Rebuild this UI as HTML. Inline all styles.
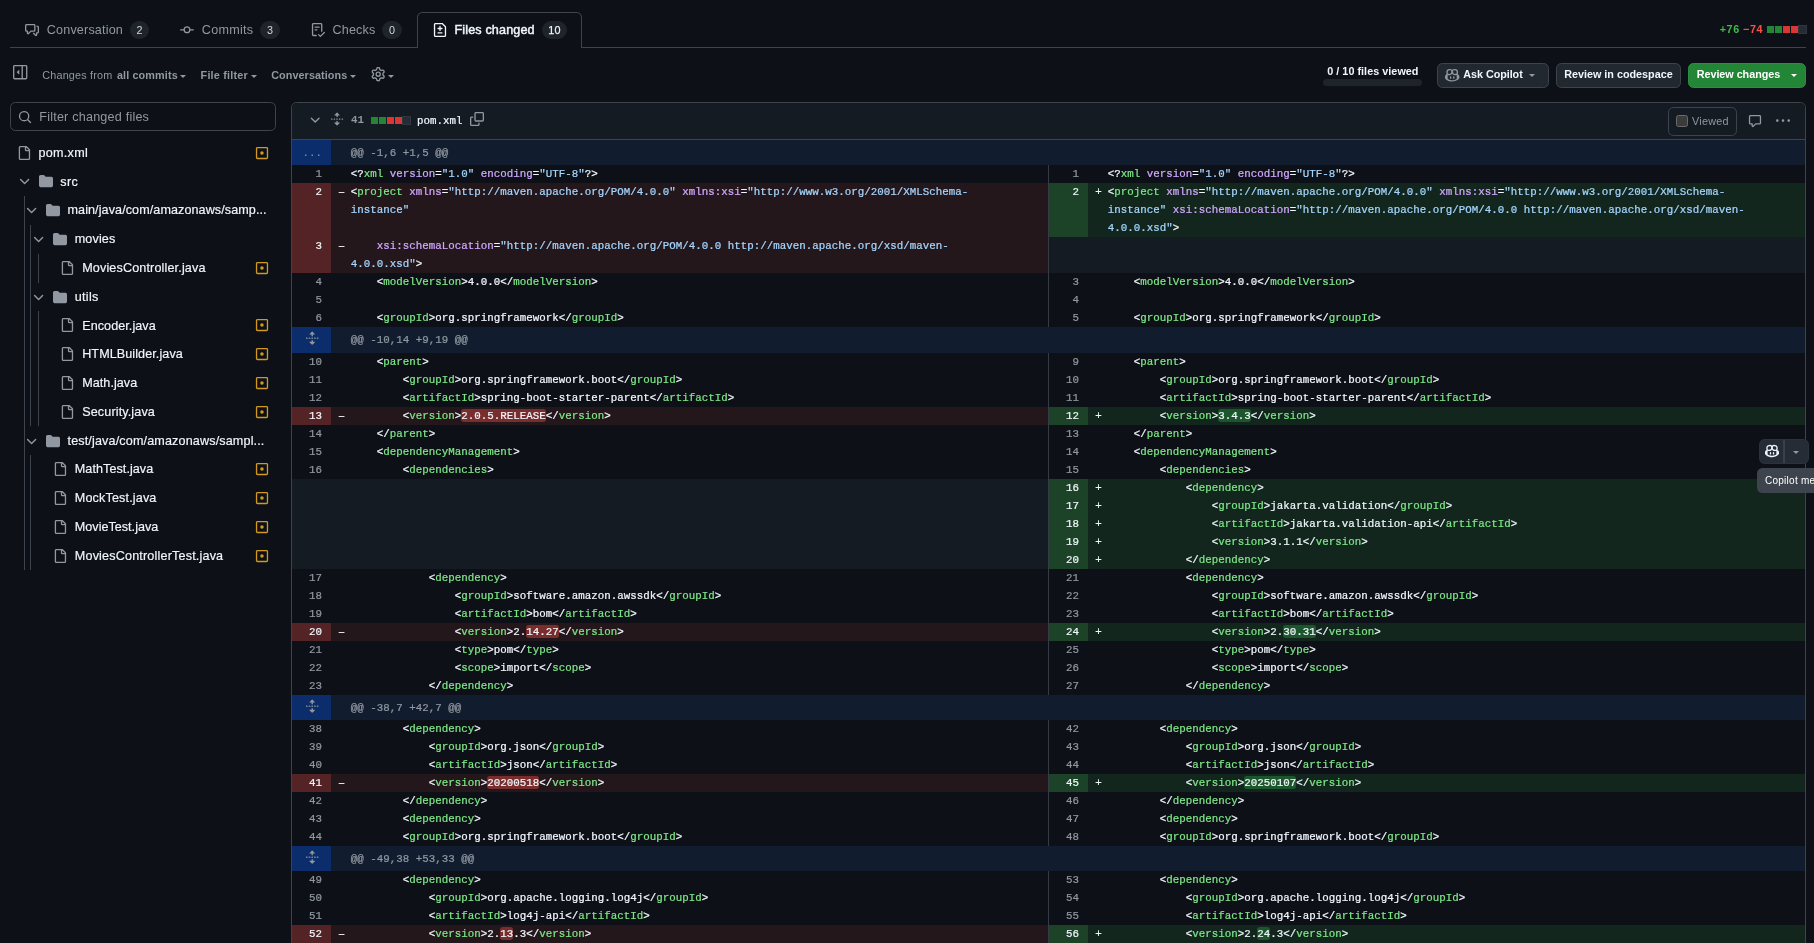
<!DOCTYPE html>
<html lang="en"><head><meta charset="utf-8"><title>Files changed</title>
<style>
html,body{margin:0;padding:0}
body{width:1814px;height:943px;overflow:hidden;background:#0d1117;position:relative;
 font-family:"Liberation Sans",Arial,sans-serif;color:#f0f6fc;-webkit-font-smoothing:antialiased}
svg{display:block;overflow:visible}
.ctr{position:absolute;height:18px;border-radius:9px;background:#1f232a;box-sizing:border-box}
.btn{position:absolute;box-sizing:border-box;border:1px solid #3d444d;border-radius:5.4px;background:#212830}
.row{position:absolute;left:0;width:100%}
.num{position:absolute;top:0;height:100%;box-sizing:border-box;text-align:right;padding-right:9px;
 font:10.8px/18px "Liberation Mono","DejaVu Sans Mono",monospace;color:#9198a1}
.code{position:absolute;top:0;height:100%;box-sizing:border-box;padding-left:19.8px;
 font:10.8px/18px "Liberation Mono","DejaVu Sans Mono",monospace;color:#f0f6fc;white-space:pre;letter-spacing:0.019px}
.mk{position:absolute;left:-12.6px;top:0}
.in{display:block;position:relative;top:-0.4px;-webkit-text-stroke:0.22px}
.ent{color:#7ee787}.e{color:#d2a8ff}.s{color:#a5d6ff}
.xd{background:rgba(248,81,73,.4);border-radius:2.7px;padding-top:.7px}
.xa{background:rgba(46,160,67,.4);border-radius:2.7px;padding-top:.7px}
#app{position:absolute;left:0;top:0;width:1814px;height:943px;overflow:hidden;will-change:transform}

</style></head>
<body>
<div id="app">
<!-- tab navigation -->
<div style="position:absolute;left:10px;top:47px;width:1796px;height:1px;background:#3d444d"></div>
<div style="position:absolute;left:417px;top:12px;width:165px;height:36px;box-sizing:border-box;border:1px solid #3d444d;border-bottom:0;border-radius:5.4px 5.4px 0 0;background:#0d1117"></div>
<svg style="position:absolute;left:25px;top:23px" width="14" height="14" viewBox="0 0 16 16" fill="#9198a1"><path d="M1.75 1h8.5c.966 0 1.75.784 1.75 1.75v5.5A1.75 1.75 0 0 1 10.25 10H7.061l-2.574 2.573A1.458 1.458 0 0 1 2 11.543V10h-.25A1.75 1.75 0 0 1 0 8.25v-5.5C0 1.784.784 1 1.75 1ZM1.5 2.75v5.5c0 .138.112.25.25.25h1a.75.75 0 0 1 .75.75v2.19l2.72-2.72a.749.749 0 0 1 .53-.22h3.5a.25.25 0 0 0 .25-.25v-5.5a.25.25 0 0 0-.25-.25h-8.5a.25.25 0 0 0-.25.25Zm13 2a.25.25 0 0 0-.25-.25h-.5a.75.75 0 0 1 0-1.5h.5c.966 0 1.75.784 1.75 1.75v5.5A1.75 1.75 0 0 1 14.25 12H14v1.543a1.458 1.458 0 0 1-2.487 1.03L9.22 12.28a.749.749 0 0 1 .326-1.275.749.749 0 0 1 .734.215l2.22 2.22v-2.19a.75.75 0 0 1 .75-.75h1a.25.25 0 0 0 .25-.25Z"/></svg>
<span style="position:absolute;left:46.8px;top:21.5px;line-height:16px;font-size:12.6px;color:#9198a1;font-weight:400;font-family:'Liberation Sans', Arial, sans-serif;letter-spacing:0.165px;white-space:pre;">Conversation</span>
<div class="ctr" style="left:130.1px;top:20.6px;width:18.7px"></div>
<span style="position:absolute;left:136.4px;top:21.8px;line-height:16px;font-size:10.8px;color:#d1d7e0;font-weight:400;font-family:'Liberation Sans', Arial, sans-serif;letter-spacing:0.184px;white-space:pre;">2</span>
<svg style="position:absolute;left:180px;top:23px" width="14" height="14" viewBox="0 0 16 16" fill="#9198a1"><path d="M11.93 8.5a4.002 4.002 0 0 1-7.86 0H.75a.75.75 0 0 1 0-1.5h3.32a4.002 4.002 0 0 1 7.86 0h3.32a.75.75 0 0 1 0 1.5Zm-1.43-.75a2.5 2.5 0 1 0-5 0 2.5 2.5 0 0 0 5 0Z"/></svg>
<span style="position:absolute;left:201.8px;top:21.5px;line-height:16px;font-size:12.6px;color:#9198a1;font-weight:400;font-family:'Liberation Sans', Arial, sans-serif;letter-spacing:0.259px;white-space:pre;">Commits</span>
<div class="ctr" style="left:260.1px;top:20.6px;width:19.7px"></div>
<span style="position:absolute;left:266.9px;top:21.8px;line-height:16px;font-size:10.8px;color:#d1d7e0;font-weight:400;font-family:'Liberation Sans', Arial, sans-serif;letter-spacing:0.184px;white-space:pre;">3</span>
<svg style="position:absolute;left:311px;top:23px" width="14" height="14" viewBox="0 0 16 16" fill="#9198a1"><path d="M2.5 1.75v11.5c0 .138.112.25.25.25h3.17a.75.75 0 0 1 0 1.5H2.75A1.75 1.75 0 0 1 1 13.25V1.75C1 .784 1.784 0 2.75 0h8.5C12.216 0 13 .784 13 1.75v7.736a.75.75 0 0 1-1.5 0V1.75a.25.25 0 0 0-.25-.25h-8.5a.25.25 0 0 0-.25.25Zm13.274 9.537v-.001l-4.557 4.45a.75.75 0 0 1-1.055-.008l-1.943-1.95a.75.75 0 0 1 1.062-1.058l1.419 1.425 4.026-3.932a.75.75 0 1 1 1.048 1.074ZM4.75 4h4.5a.75.75 0 0 1 0 1.5h-4.5a.75.75 0 0 1 0-1.5ZM4 7.75A.75.75 0 0 1 4.75 7h2a.75.75 0 0 1 0 1.5h-2A.75.75 0 0 1 4 7.75Z"/></svg>
<span style="position:absolute;left:332.5px;top:21.5px;line-height:16px;font-size:12.6px;color:#9198a1;font-weight:400;font-family:'Liberation Sans', Arial, sans-serif;letter-spacing:0.167px;white-space:pre;">Checks</span>
<div class="ctr" style="left:382.3px;top:20.6px;width:19.7px"></div>
<span style="position:absolute;left:389px;top:21.8px;line-height:16px;font-size:10.8px;color:#d1d7e0;font-weight:400;font-family:'Liberation Sans', Arial, sans-serif;letter-spacing:0.484px;white-space:pre;">0</span>
<svg style="position:absolute;left:433px;top:23px" width="14" height="14" viewBox="0 0 16 16" fill="#f0f6fc"><path d="M1 1.75C1 .784 1.784 0 2.75 0h7.586c.464 0 .909.184 1.237.513l2.914 2.914c.329.328.513.773.513 1.237v9.586A1.75 1.75 0 0 1 13.25 16H2.75A1.75 1.75 0 0 1 1 14.25Zm1.75-.25a.25.25 0 0 0-.25.25v12.5c0 .138.112.25.25.25h10.5a.25.25 0 0 0 .25-.25V4.664a.25.25 0 0 0-.073-.177l-2.914-2.914a.25.25 0 0 0-.177-.073ZM8 3.25a.75.75 0 0 1 .75.75v1.5h1.5a.75.75 0 0 1 0 1.5h-1.5v1.5a.75.75 0 0 1-1.5 0V7h-1.5a.75.75 0 0 1 0-1.5h1.5V4A.75.75 0 0 1 8 3.25Zm-3 8a.75.75 0 0 1 .75-.75h4.5a.75.75 0 0 1 0 1.5h-4.5a.75.75 0 0 1-.75-.75Z"/></svg>
<span style="position:absolute;left:454.5px;top:21.5px;line-height:16px;font-size:12.6px;color:#f0f6fc;font-weight:400;font-family:'Liberation Sans', Arial, sans-serif;letter-spacing:0.137px;white-space:pre;-webkit-text-stroke:0.45px">Files changed</span>
<div class="ctr" style="left:541.9px;top:20.6px;width:25.3px"></div>
<span style="position:absolute;left:548.2px;top:21.8px;line-height:16px;font-size:10.8px;color:#f0f6fc;font-weight:400;font-family:'Liberation Sans', Arial, sans-serif;letter-spacing:0.392px;white-space:pre;-webkit-text-stroke:0.25px">10</span>
<span style="position:absolute;left:1719.7px;top:21.3px;line-height:16px;font-size:10.8px;color:#3fb950;font-weight:700;font-family:'Liberation Sans', Arial, sans-serif;letter-spacing:0.624px;white-space:pre;">+76</span>
<span style="position:absolute;left:1743px;top:21.3px;line-height:16px;font-size:10.8px;color:#f85149;font-weight:700;font-family:'Liberation Sans', Arial, sans-serif;letter-spacing:0.624px;white-space:pre;">−74</span>
<div style="position:absolute;left:1766.8px;top:26px;width:7.1px;height:7.1px;background:#238636"></div>
<div style="position:absolute;left:1774.87px;top:26px;width:7.1px;height:7.1px;background:#238636"></div>
<div style="position:absolute;left:1782.94px;top:26px;width:7.1px;height:7.1px;background:#da3633"></div>
<div style="position:absolute;left:1791.01px;top:26px;width:7.1px;height:7.1px;background:#da3633"></div>
<div style="position:absolute;left:1799.08px;top:26px;width:7.1px;height:7.1px;background:#262c36;outline:0.9px solid #2f3640"></div>
<!-- diff toolbar -->
<svg style="position:absolute;left:13.2px;top:65px" width="14.4" height="14.4" viewBox="0 0 16 16" fill="#9198a1"><path d="m4.177 7.823 2.396-2.396A.25.25 0 0 1 7 5.604v4.792a.25.25 0 0 1-.427.177L4.177 8.177a.25.25 0 0 1 0-.354Z"/><path d="M0 1.75C0 .784.784 0 1.75 0h12.5C15.216 0 16 .784 16 1.75v12.5A1.75 1.75 0 0 1 14.25 16H1.75A1.75 1.75 0 0 1 0 14.25Zm1.75-.25a.25.25 0 0 0-.25.25v12.5c0 .138.112.25.25.25H9.5v-13Zm12.5 13a.25.25 0 0 0 .25-.25V1.75a.25.25 0 0 0-.25-.25H11v13Z"/></svg>
<span style="position:absolute;left:42.3px;top:67.4px;line-height:16px;font-size:10.8px;color:#9198a1;font-weight:400;font-family:'Liberation Sans', Arial, sans-serif;letter-spacing:0.184px;white-space:pre;">Changes from </span>
<span style="position:absolute;left:116.9px;top:67.4px;line-height:16px;font-size:10.8px;color:#9198a1;font-weight:700;font-family:'Liberation Sans', Arial, sans-serif;letter-spacing:0.145px;white-space:pre;">all commits</span>
<div style="position:absolute;left:180.1px;top:74.6px;width:0;height:0;border-left:3.6px solid transparent;border-right:3.6px solid transparent;border-top:3.6px solid #9198a1"></div>
<span style="position:absolute;left:200.6px;top:67.4px;line-height:16px;font-size:10.8px;color:#9198a1;font-weight:700;font-family:'Liberation Sans', Arial, sans-serif;letter-spacing:0.209px;white-space:pre;">File filter</span>
<div style="position:absolute;left:250.7px;top:74.6px;width:0;height:0;border-left:3.6px solid transparent;border-right:3.6px solid transparent;border-top:3.6px solid #9198a1"></div>
<span style="position:absolute;left:271.2px;top:67.4px;line-height:16px;font-size:10.8px;color:#9198a1;font-weight:700;font-family:'Liberation Sans', Arial, sans-serif;letter-spacing:0.085px;white-space:pre;">Conversations</span>
<div style="position:absolute;left:350.2px;top:74.6px;width:0;height:0;border-left:3.6px solid transparent;border-right:3.6px solid transparent;border-top:3.6px solid #9198a1"></div>
<svg style="position:absolute;left:371.2px;top:66.8px" width="14.4" height="14.4" viewBox="0 0 16 16" fill="#9198a1"><path d="M8 0a8.2 8.2 0 0 1 .701.031C9.444.095 9.99.645 10.16 1.29l.288 1.107c.018.066.079.158.212.224.231.114.454.243.668.386.123.082.233.09.299.071l1.103-.303c.644-.176 1.392.021 1.82.63.27.385.506.792.704 1.218.315.675.111 1.422-.364 1.891l-.814.806c-.049.048-.098.147-.088.294.016.257.016.515 0 .772-.01.147.038.246.088.294l.814.806c.475.469.679 1.216.364 1.891a7.977 7.977 0 0 1-.704 1.217c-.428.61-1.176.807-1.82.63l-1.102-.302c-.067-.019-.177-.011-.3.071a5.909 5.909 0 0 1-.668.386c-.133.066-.194.158-.211.224l-.29 1.106c-.168.646-.715 1.196-1.458 1.26a8.006 8.006 0 0 1-1.402 0c-.743-.064-1.289-.614-1.458-1.26l-.289-1.106c-.018-.066-.079-.158-.212-.224a5.738 5.738 0 0 1-.668-.386c-.123-.082-.233-.09-.299-.071l-1.103.303c-.644.176-1.392-.021-1.82-.63a8.12 8.12 0 0 1-.704-1.218c-.315-.675-.111-1.422.363-1.891l.815-.806c.05-.048.098-.147.088-.294a6.214 6.214 0 0 1 0-.772c.01-.147-.038-.246-.088-.294l-.815-.806C.635 6.045.431 5.298.746 4.623a7.92 7.92 0 0 1 .704-1.217c.428-.61 1.176-.807 1.82-.63l1.102.302c.067.019.177.011.3-.071.214-.143.437-.272.668-.386.133-.066.194-.158.211-.224l.29-1.106C6.009.645 6.556.095 7.299.03 7.53.01 7.764 0 8 0Zm-.571 1.525c-.036.003-.108.036-.137.146l-.289 1.105c-.147.561-.549.967-.998 1.189-.173.086-.34.183-.5.29-.417.278-.97.423-1.529.27l-1.103-.303c-.109-.03-.175.016-.195.045-.22.312-.412.644-.573.99-.014.031-.021.11.059.19l.815.806c.411.406.562.957.53 1.456a4.709 4.709 0 0 0 0 .582c.032.499-.119 1.05-.53 1.456l-.815.806c-.081.08-.073.159-.059.19.162.346.353.677.573.989.02.03.085.076.195.046l1.102-.303c.56-.153 1.113-.008 1.53.27.161.107.328.204.501.29.447.222.85.629.997 1.189l.289 1.105c.029.109.101.143.137.146a6.6 6.6 0 0 0 1.142 0c.036-.003.108-.036.137-.146l.289-1.105c.147-.561.549-.967.998-1.189.173-.086.34-.183.5-.29.417-.278.97-.423 1.529-.27l1.103.303c.109.029.175-.016.195-.045.22-.313.411-.644.573-.99.014-.031.021-.11-.059-.19l-.815-.806c-.411-.406-.562-.957-.53-1.456a4.709 4.709 0 0 0 0-.582c-.032-.499.119-1.05.53-1.456l.815-.806c.081-.08.073-.159.059-.19a6.464 6.464 0 0 0-.573-.989c-.02-.03-.085-.076-.195-.046l-1.102.303c-.56.153-1.113.008-1.53-.27a4.44 4.44 0 0 0-.501-.29c-.447-.222-.85-.629-.997-1.189l-.289-1.105c-.029-.11-.101-.143-.137-.146a6.6 6.6 0 0 0-1.142 0ZM11 8a3 3 0 1 1-6 0 3 3 0 0 1 6 0ZM9.5 8a1.5 1.5 0 1 0-3.001.001A1.5 1.5 0 0 0 9.5 8Z"/></svg>
<div style="position:absolute;left:387.8px;top:74.6px;width:0;height:0;border-left:3.6px solid transparent;border-right:3.6px solid transparent;border-top:3.6px solid #9198a1"></div>
<span style="position:absolute;left:1327.2px;top:63.4px;line-height:16px;font-size:10.8px;color:#f0f6fc;font-weight:700;font-family:'Liberation Sans', Arial, sans-serif;letter-spacing:0.036px;white-space:pre;">0 / 10 files viewed</span>
<div style="position:absolute;left:1322.9px;top:79px;width:99.3px;height:7.1px;background:#1f232a;border-radius:3.6px"></div>
<div class="btn" style="left:1437px;top:62.8px;width:112px;height:25.2px"></div>
<svg style="position:absolute;left:1444.7px;top:67.9px" width="14.4" height="14.4" viewBox="0 0 16 16" fill="#9198a1"><path d="M7.998 15.035c-4.562 0-7.873-2.914-7.998-3.749V9.338c.085-.628.677-1.686 1.588-2.065.013-.07.024-.143.036-.218.029-.183.06-.384.126-.612-.201-.508-.254-1.084-.254-1.656 0-.87.128-1.769.693-2.484.579-.733 1.494-1.124 2.724-1.261 1.206-.134 2.262.034 2.944.765.05.053.096.108.139.165.044-.057.094-.112.143-.165.682-.731 1.738-.899 2.944-.765 1.23.137 2.145.528 2.724 1.261.566.715.693 1.614.693 2.484 0 .572-.053 1.148-.254 1.656.066.228.098.429.126.612.012.076.024.148.037.218.924.385 1.522 1.471 1.591 2.095v1.872c0 .766-3.351 3.795-8.002 3.795Zm0-1.485c2.28 0 4.584-1.11 5.002-1.433V7.862l-.023-.116c-.49.21-1.075.291-1.727.291-1.146 0-2.059-.327-2.71-.991A3.222 3.222 0 0 1 8 6.303a3.24 3.24 0 0 1-.544.743c-.65.664-1.563.991-2.71.991-.652 0-1.236-.081-1.727-.291l-.023.116v4.255c.419.323 2.722 1.433 5.002 1.433ZM6.762 2.83c-.193-.206-.637-.413-1.682-.297-1.019.113-1.479.404-1.713.7-.247.312-.369.789-.369 1.554 0 .793.129 1.171.308 1.371.162.181.519.379 1.442.379.853 0 1.339-.235 1.638-.54.315-.322.527-.827.617-1.553.117-.935-.037-1.395-.241-1.614Zm4.155-.297c-1.044-.116-1.488.091-1.681.297-.204.219-.359.679-.242 1.614.091.726.303 1.231.618 1.553.299.305.784.54 1.638.54.922 0 1.28-.198 1.442-.379.179-.2.308-.578.308-1.371 0-.765-.123-1.242-.37-1.554-.233-.296-.693-.587-1.713-.7Z"/><path d="M6.25 9.037a.75.75 0 0 1 .75.75v1.501a.75.75 0 0 1-1.5 0V9.787a.75.75 0 0 1 .75-.75Zm4.25.75v1.501a.75.75 0 0 1-1.5 0V9.787a.75.75 0 0 1 1.5 0Z"/></svg>
<span style="position:absolute;left:1463.3px;top:66.2px;line-height:16px;font-size:10.8px;color:#f0f6fc;font-weight:700;font-family:'Liberation Sans', Arial, sans-serif;letter-spacing:-0.053px;white-space:pre;">Ask Copilot</span>
<div style="position:absolute;left:1529.4px;top:73.9px;width:0;height:0;border-left:3.6px solid transparent;border-right:3.6px solid transparent;border-top:3.6px solid #9198a1"></div>
<div class="btn" style="left:1555.8px;top:62.8px;width:125px;height:25.2px"></div>
<span style="position:absolute;left:1564.2px;top:66.2px;line-height:16px;font-size:10.8px;color:#f0f6fc;font-weight:700;font-family:'Liberation Sans', Arial, sans-serif;letter-spacing:-0.007px;white-space:pre;">Review in codespace</span>
<div class="btn" style="left:1687.8px;top:62.8px;width:118.3px;height:25.2px;background:#238636;border-color:#2a8f3e"></div>
<span style="position:absolute;left:1696.7px;top:66.2px;line-height:16px;font-size:10.8px;color:#ffffff;font-weight:700;font-family:'Liberation Sans', Arial, sans-serif;letter-spacing:-0.037px;white-space:pre;">Review changes</span>
<div style="position:absolute;left:1791.2px;top:74.1px;width:0;height:0;border-left:3.6px solid transparent;border-right:3.6px solid transparent;border-top:3.6px solid #ffffff"></div>
<!-- file tree sidebar -->
<div style="position:absolute;left:10px;top:102px;width:266px;height:28.8px;box-sizing:border-box;border:1px solid #3d444d;border-radius:5.4px;background:#0d1117"></div>
<svg style="position:absolute;left:17.6px;top:110.3px" width="14" height="14" viewBox="0 0 16 16" fill="#9198a1"><path d="M10.68 11.74a6 6 0 0 1-7.922-8.982 6 6 0 0 1 8.982 7.922l3.04 3.04a.749.749 0 0 1-.326 1.275.749.749 0 0 1-.734-.215ZM11.5 7a4.499 4.499 0 1 0-8.997 0A4.499 4.499 0 0 0 11.5 7Z"/></svg>
<span style="position:absolute;left:39.3px;top:108.6px;line-height:16px;font-size:12.6px;color:#9198a1;font-weight:400;font-family:'Liberation Sans', Arial, sans-serif;letter-spacing:0.205px;white-space:pre;">Filter changed files</span>
<div style="position:absolute;left:24px;top:196px;width:1px;height:374px;background:#3d444d"></div>
<div style="position:absolute;left:30px;top:225px;width:1px;height:201px;background:#3d444d"></div>
<div style="position:absolute;left:38px;top:254px;width:1px;height:28.6px;background:#3d444d"></div>
<div style="position:absolute;left:38px;top:311.4px;width:1px;height:114.6px;background:#3d444d"></div>
<div style="position:absolute;left:30px;top:455.2px;width:1px;height:114.8px;background:#3d444d"></div>
<svg style="position:absolute;left:17px;top:146px" width="14" height="14" viewBox="0 0 16 16" fill="#9198a1"><path d="M2 1.75C2 .784 2.784 0 3.75 0h6.586c.464 0 .909.184 1.237.513l2.914 2.914c.329.328.513.773.513 1.237v9.586A1.75 1.75 0 0 1 13.25 16h-9.5A1.75 1.75 0 0 1 2 14.25Zm1.75-.25a.25.25 0 0 0-.25.25v12.5c0 .138.112.25.25.25h9.5a.25.25 0 0 0 .25-.25V6h-2.75A1.75 1.75 0 0 1 9 4.25V1.5Zm6.75.062V4.25c0 .138.112.25.25.25h2.688l-.011-.013-2.914-2.914-.013-.011Z"/></svg>
<span style="position:absolute;left:38.6px;top:145px;line-height:16px;font-size:12.6px;color:#f0f6fc;font-weight:400;font-family:'Liberation Sans', Arial, sans-serif;letter-spacing:0.258px;white-space:pre;-webkit-text-stroke:0.18px">pom.xml</span>
<svg style="position:absolute;left:255px;top:146px" width="14" height="14" viewBox="0 0 16 16" fill="#d29922"><path d="M13.25 1c.966 0 1.75.784 1.75 1.75v10.5A1.75 1.75 0 0 1 13.25 15H2.75A1.75 1.75 0 0 1 1 13.25V2.75C1 1.784 1.784 1 2.75 1ZM2.75 2.5a.25.25 0 0 0-.25.25v10.5c0 .138.112.25.25.25h10.5a.25.25 0 0 0 .25-.25V2.75a.25.25 0 0 0-.25-.25ZM8 10a2 2 0 1 1-.001-3.999A2 2 0 0 1 8 10Z"/></svg>
<svg style="position:absolute;left:16.6px;top:173.6px" width="15.2" height="15.2" viewBox="0 0 16 16" fill="#9198a1"><path d="M12.78 5.22a.749.749 0 0 1 0 1.06l-4.25 4.25a.749.749 0 0 1-1.06 0L3.22 6.28a.749.749 0 1 1 1.06-1.06L8 8.939l3.72-3.719a.749.749 0 0 1 1.06 0Z"/></svg>
<svg style="position:absolute;left:39px;top:174px" width="14" height="14" viewBox="0 0 16 16" fill="#9198a1"><path d="M1.75 1A1.75 1.75 0 0 0 0 2.75v10.5C0 14.216.784 15 1.75 15h12.5A1.75 1.75 0 0 0 16 13.25v-8.5A1.75 1.75 0 0 0 14.25 3H7.5a.25.25 0 0 1-.2-.1l-.9-1.2C6.07 1.26 5.55 1 5 1H1.75Z"/></svg>
<span style="position:absolute;left:60.3px;top:174px;line-height:16px;font-size:12.6px;color:#f0f6fc;font-weight:400;font-family:'Liberation Sans', Arial, sans-serif;letter-spacing:0.301px;white-space:pre;-webkit-text-stroke:0.18px">src</span>
<svg style="position:absolute;left:23.6px;top:202.6px" width="15.2" height="15.2" viewBox="0 0 16 16" fill="#9198a1"><path d="M12.78 5.22a.749.749 0 0 1 0 1.06l-4.25 4.25a.749.749 0 0 1-1.06 0L3.22 6.28a.749.749 0 1 1 1.06-1.06L8 8.939l3.72-3.719a.749.749 0 0 1 1.06 0Z"/></svg>
<svg style="position:absolute;left:46px;top:203px" width="14" height="14" viewBox="0 0 16 16" fill="#9198a1"><path d="M1.75 1A1.75 1.75 0 0 0 0 2.75v10.5C0 14.216.784 15 1.75 15h12.5A1.75 1.75 0 0 0 16 13.25v-8.5A1.75 1.75 0 0 0 14.25 3H7.5a.25.25 0 0 1-.2-.1l-.9-1.2C6.07 1.26 5.55 1 5 1H1.75Z"/></svg>
<span style="position:absolute;left:67.5px;top:202px;line-height:16px;font-size:12.6px;color:#f0f6fc;font-weight:400;font-family:'Liberation Sans', Arial, sans-serif;letter-spacing:0.081px;white-space:pre;-webkit-text-stroke:0.18px">main/java/com/amazonaws/samp...</span>
<svg style="position:absolute;left:30.6px;top:231.6px" width="15.2" height="15.2" viewBox="0 0 16 16" fill="#9198a1"><path d="M12.78 5.22a.749.749 0 0 1 0 1.06l-4.25 4.25a.749.749 0 0 1-1.06 0L3.22 6.28a.749.749 0 1 1 1.06-1.06L8 8.939l3.72-3.719a.749.749 0 0 1 1.06 0Z"/></svg>
<svg style="position:absolute;left:53px;top:232px" width="14" height="14" viewBox="0 0 16 16" fill="#9198a1"><path d="M1.75 1A1.75 1.75 0 0 0 0 2.75v10.5C0 14.216.784 15 1.75 15h12.5A1.75 1.75 0 0 0 16 13.25v-8.5A1.75 1.75 0 0 0 14.25 3H7.5a.25.25 0 0 1-.2-.1l-.9-1.2C6.07 1.26 5.55 1 5 1H1.75Z"/></svg>
<span style="position:absolute;left:74.7px;top:231px;line-height:16px;font-size:12.6px;color:#f0f6fc;font-weight:400;font-family:'Liberation Sans', Arial, sans-serif;letter-spacing:0.135px;white-space:pre;-webkit-text-stroke:0.18px">movies</span>
<svg style="position:absolute;left:60px;top:261px" width="14" height="14" viewBox="0 0 16 16" fill="#9198a1"><path d="M2 1.75C2 .784 2.784 0 3.75 0h6.586c.464 0 .909.184 1.237.513l2.914 2.914c.329.328.513.773.513 1.237v9.586A1.75 1.75 0 0 1 13.25 16h-9.5A1.75 1.75 0 0 1 2 14.25Zm1.75-.25a.25.25 0 0 0-.25.25v12.5c0 .138.112.25.25.25h9.5a.25.25 0 0 0 .25-.25V6h-2.75A1.75 1.75 0 0 1 9 4.25V1.5Zm6.75.062V4.25c0 .138.112.25.25.25h2.688l-.011-.013-2.914-2.914-.013-.011Z"/></svg>
<span style="position:absolute;left:82.2px;top:260px;line-height:16px;font-size:12.6px;color:#f0f6fc;font-weight:400;font-family:'Liberation Sans', Arial, sans-serif;letter-spacing:0.143px;white-space:pre;-webkit-text-stroke:0.18px">MoviesController.java</span>
<svg style="position:absolute;left:255px;top:261px" width="14" height="14" viewBox="0 0 16 16" fill="#d29922"><path d="M13.25 1c.966 0 1.75.784 1.75 1.75v10.5A1.75 1.75 0 0 1 13.25 15H2.75A1.75 1.75 0 0 1 1 13.25V2.75C1 1.784 1.784 1 2.75 1ZM2.75 2.5a.25.25 0 0 0-.25.25v10.5c0 .138.112.25.25.25h10.5a.25.25 0 0 0 .25-.25V2.75a.25.25 0 0 0-.25-.25ZM8 10a2 2 0 1 1-.001-3.999A2 2 0 0 1 8 10Z"/></svg>
<svg style="position:absolute;left:30.6px;top:289.6px" width="15.2" height="15.2" viewBox="0 0 16 16" fill="#9198a1"><path d="M12.78 5.22a.749.749 0 0 1 0 1.06l-4.25 4.25a.749.749 0 0 1-1.06 0L3.22 6.28a.749.749 0 1 1 1.06-1.06L8 8.939l3.72-3.719a.749.749 0 0 1 1.06 0Z"/></svg>
<svg style="position:absolute;left:53px;top:290px" width="14" height="14" viewBox="0 0 16 16" fill="#9198a1"><path d="M1.75 1A1.75 1.75 0 0 0 0 2.75v10.5C0 14.216.784 15 1.75 15h12.5A1.75 1.75 0 0 0 16 13.25v-8.5A1.75 1.75 0 0 0 14.25 3H7.5a.25.25 0 0 1-.2-.1l-.9-1.2C6.07 1.26 5.55 1 5 1H1.75Z"/></svg>
<span style="position:absolute;left:74.7px;top:289px;line-height:16px;font-size:12.6px;color:#f0f6fc;font-weight:400;font-family:'Liberation Sans', Arial, sans-serif;letter-spacing:0.299px;white-space:pre;-webkit-text-stroke:0.18px">utils</span>
<svg style="position:absolute;left:60px;top:318px" width="14" height="14" viewBox="0 0 16 16" fill="#9198a1"><path d="M2 1.75C2 .784 2.784 0 3.75 0h6.586c.464 0 .909.184 1.237.513l2.914 2.914c.329.328.513.773.513 1.237v9.586A1.75 1.75 0 0 1 13.25 16h-9.5A1.75 1.75 0 0 1 2 14.25Zm1.75-.25a.25.25 0 0 0-.25.25v12.5c0 .138.112.25.25.25h9.5a.25.25 0 0 0 .25-.25V6h-2.75A1.75 1.75 0 0 1 9 4.25V1.5Zm6.75.062V4.25c0 .138.112.25.25.25h2.688l-.011-.013-2.914-2.914-.013-.011Z"/></svg>
<span style="position:absolute;left:82.2px;top:318px;line-height:16px;font-size:12.6px;color:#f0f6fc;font-weight:400;font-family:'Liberation Sans', Arial, sans-serif;letter-spacing:0.064px;white-space:pre;-webkit-text-stroke:0.18px">Encoder.java</span>
<svg style="position:absolute;left:255px;top:318px" width="14" height="14" viewBox="0 0 16 16" fill="#d29922"><path d="M13.25 1c.966 0 1.75.784 1.75 1.75v10.5A1.75 1.75 0 0 1 13.25 15H2.75A1.75 1.75 0 0 1 1 13.25V2.75C1 1.784 1.784 1 2.75 1ZM2.75 2.5a.25.25 0 0 0-.25.25v10.5c0 .138.112.25.25.25h10.5a.25.25 0 0 0 .25-.25V2.75a.25.25 0 0 0-.25-.25ZM8 10a2 2 0 1 1-.001-3.999A2 2 0 0 1 8 10Z"/></svg>
<svg style="position:absolute;left:60px;top:347px" width="14" height="14" viewBox="0 0 16 16" fill="#9198a1"><path d="M2 1.75C2 .784 2.784 0 3.75 0h6.586c.464 0 .909.184 1.237.513l2.914 2.914c.329.328.513.773.513 1.237v9.586A1.75 1.75 0 0 1 13.25 16h-9.5A1.75 1.75 0 0 1 2 14.25Zm1.75-.25a.25.25 0 0 0-.25.25v12.5c0 .138.112.25.25.25h9.5a.25.25 0 0 0 .25-.25V6h-2.75A1.75 1.75 0 0 1 9 4.25V1.5Zm6.75.062V4.25c0 .138.112.25.25.25h2.688l-.011-.013-2.914-2.914-.013-.011Z"/></svg>
<span style="position:absolute;left:82.2px;top:346px;line-height:16px;font-size:12.6px;color:#f0f6fc;font-weight:400;font-family:'Liberation Sans', Arial, sans-serif;letter-spacing:0.081px;white-space:pre;-webkit-text-stroke:0.18px">HTMLBuilder.java</span>
<svg style="position:absolute;left:255px;top:347px" width="14" height="14" viewBox="0 0 16 16" fill="#d29922"><path d="M13.25 1c.966 0 1.75.784 1.75 1.75v10.5A1.75 1.75 0 0 1 13.25 15H2.75A1.75 1.75 0 0 1 1 13.25V2.75C1 1.784 1.784 1 2.75 1ZM2.75 2.5a.25.25 0 0 0-.25.25v10.5c0 .138.112.25.25.25h10.5a.25.25 0 0 0 .25-.25V2.75a.25.25 0 0 0-.25-.25ZM8 10a2 2 0 1 1-.001-3.999A2 2 0 0 1 8 10Z"/></svg>
<svg style="position:absolute;left:60px;top:376px" width="14" height="14" viewBox="0 0 16 16" fill="#9198a1"><path d="M2 1.75C2 .784 2.784 0 3.75 0h6.586c.464 0 .909.184 1.237.513l2.914 2.914c.329.328.513.773.513 1.237v9.586A1.75 1.75 0 0 1 13.25 16h-9.5A1.75 1.75 0 0 1 2 14.25Zm1.75-.25a.25.25 0 0 0-.25.25v12.5c0 .138.112.25.25.25h9.5a.25.25 0 0 0 .25-.25V6h-2.75A1.75 1.75 0 0 1 9 4.25V1.5Zm6.75.062V4.25c0 .138.112.25.25.25h2.688l-.011-.013-2.914-2.914-.013-.011Z"/></svg>
<span style="position:absolute;left:82.2px;top:375px;line-height:16px;font-size:12.6px;color:#f0f6fc;font-weight:400;font-family:'Liberation Sans', Arial, sans-serif;letter-spacing:0.055px;white-space:pre;-webkit-text-stroke:0.18px">Math.java</span>
<svg style="position:absolute;left:255px;top:376px" width="14" height="14" viewBox="0 0 16 16" fill="#d29922"><path d="M13.25 1c.966 0 1.75.784 1.75 1.75v10.5A1.75 1.75 0 0 1 13.25 15H2.75A1.75 1.75 0 0 1 1 13.25V2.75C1 1.784 1.784 1 2.75 1ZM2.75 2.5a.25.25 0 0 0-.25.25v10.5c0 .138.112.25.25.25h10.5a.25.25 0 0 0 .25-.25V2.75a.25.25 0 0 0-.25-.25ZM8 10a2 2 0 1 1-.001-3.999A2 2 0 0 1 8 10Z"/></svg>
<svg style="position:absolute;left:60px;top:405px" width="14" height="14" viewBox="0 0 16 16" fill="#9198a1"><path d="M2 1.75C2 .784 2.784 0 3.75 0h6.586c.464 0 .909.184 1.237.513l2.914 2.914c.329.328.513.773.513 1.237v9.586A1.75 1.75 0 0 1 13.25 16h-9.5A1.75 1.75 0 0 1 2 14.25Zm1.75-.25a.25.25 0 0 0-.25.25v12.5c0 .138.112.25.25.25h9.5a.25.25 0 0 0 .25-.25V6h-2.75A1.75 1.75 0 0 1 9 4.25V1.5Zm6.75.062V4.25c0 .138.112.25.25.25h2.688l-.011-.013-2.914-2.914-.013-.011Z"/></svg>
<span style="position:absolute;left:82.2px;top:404px;line-height:16px;font-size:12.6px;color:#f0f6fc;font-weight:400;font-family:'Liberation Sans', Arial, sans-serif;letter-spacing:0.125px;white-space:pre;-webkit-text-stroke:0.18px">Security.java</span>
<svg style="position:absolute;left:255px;top:405px" width="14" height="14" viewBox="0 0 16 16" fill="#d29922"><path d="M13.25 1c.966 0 1.75.784 1.75 1.75v10.5A1.75 1.75 0 0 1 13.25 15H2.75A1.75 1.75 0 0 1 1 13.25V2.75C1 1.784 1.784 1 2.75 1ZM2.75 2.5a.25.25 0 0 0-.25.25v10.5c0 .138.112.25.25.25h10.5a.25.25 0 0 0 .25-.25V2.75a.25.25 0 0 0-.25-.25ZM8 10a2 2 0 1 1-.001-3.999A2 2 0 0 1 8 10Z"/></svg>
<svg style="position:absolute;left:23.6px;top:433.6px" width="15.2" height="15.2" viewBox="0 0 16 16" fill="#9198a1"><path d="M12.78 5.22a.749.749 0 0 1 0 1.06l-4.25 4.25a.749.749 0 0 1-1.06 0L3.22 6.28a.749.749 0 1 1 1.06-1.06L8 8.939l3.72-3.719a.749.749 0 0 1 1.06 0Z"/></svg>
<svg style="position:absolute;left:46px;top:434px" width="14" height="14" viewBox="0 0 16 16" fill="#9198a1"><path d="M1.75 1A1.75 1.75 0 0 0 0 2.75v10.5C0 14.216.784 15 1.75 15h12.5A1.75 1.75 0 0 0 16 13.25v-8.5A1.75 1.75 0 0 0 14.25 3H7.5a.25.25 0 0 1-.2-.1l-.9-1.2C6.07 1.26 5.55 1 5 1H1.75Z"/></svg>
<span style="position:absolute;left:67.5px;top:433px;line-height:16px;font-size:12.6px;color:#f0f6fc;font-weight:400;font-family:'Liberation Sans', Arial, sans-serif;letter-spacing:0.141px;white-space:pre;-webkit-text-stroke:0.18px">test/java/com/amazonaws/sampl...</span>
<svg style="position:absolute;left:53px;top:462px" width="14" height="14" viewBox="0 0 16 16" fill="#9198a1"><path d="M2 1.75C2 .784 2.784 0 3.75 0h6.586c.464 0 .909.184 1.237.513l2.914 2.914c.329.328.513.773.513 1.237v9.586A1.75 1.75 0 0 1 13.25 16h-9.5A1.75 1.75 0 0 1 2 14.25Zm1.75-.25a.25.25 0 0 0-.25.25v12.5c0 .138.112.25.25.25h9.5a.25.25 0 0 0 .25-.25V6h-2.75A1.75 1.75 0 0 1 9 4.25V1.5Zm6.75.062V4.25c0 .138.112.25.25.25h2.688l-.011-.013-2.914-2.914-.013-.011Z"/></svg>
<span style="position:absolute;left:74.8px;top:461px;line-height:16px;font-size:12.6px;color:#f0f6fc;font-weight:400;font-family:'Liberation Sans', Arial, sans-serif;letter-spacing:0.061px;white-space:pre;-webkit-text-stroke:0.18px">MathTest.java</span>
<svg style="position:absolute;left:255px;top:462px" width="14" height="14" viewBox="0 0 16 16" fill="#d29922"><path d="M13.25 1c.966 0 1.75.784 1.75 1.75v10.5A1.75 1.75 0 0 1 13.25 15H2.75A1.75 1.75 0 0 1 1 13.25V2.75C1 1.784 1.784 1 2.75 1ZM2.75 2.5a.25.25 0 0 0-.25.25v10.5c0 .138.112.25.25.25h10.5a.25.25 0 0 0 .25-.25V2.75a.25.25 0 0 0-.25-.25ZM8 10a2 2 0 1 1-.001-3.999A2 2 0 0 1 8 10Z"/></svg>
<svg style="position:absolute;left:53px;top:491px" width="14" height="14" viewBox="0 0 16 16" fill="#9198a1"><path d="M2 1.75C2 .784 2.784 0 3.75 0h6.586c.464 0 .909.184 1.237.513l2.914 2.914c.329.328.513.773.513 1.237v9.586A1.75 1.75 0 0 1 13.25 16h-9.5A1.75 1.75 0 0 1 2 14.25Zm1.75-.25a.25.25 0 0 0-.25.25v12.5c0 .138.112.25.25.25h9.5a.25.25 0 0 0 .25-.25V6h-2.75A1.75 1.75 0 0 1 9 4.25V1.5Zm6.75.062V4.25c0 .138.112.25.25.25h2.688l-.011-.013-2.914-2.914-.013-.011Z"/></svg>
<span style="position:absolute;left:74.8px;top:490px;line-height:16px;font-size:12.6px;color:#f0f6fc;font-weight:400;font-family:'Liberation Sans', Arial, sans-serif;letter-spacing:0.146px;white-space:pre;-webkit-text-stroke:0.18px">MockTest.java</span>
<svg style="position:absolute;left:255px;top:491px" width="14" height="14" viewBox="0 0 16 16" fill="#d29922"><path d="M13.25 1c.966 0 1.75.784 1.75 1.75v10.5A1.75 1.75 0 0 1 13.25 15H2.75A1.75 1.75 0 0 1 1 13.25V2.75C1 1.784 1.784 1 2.75 1ZM2.75 2.5a.25.25 0 0 0-.25.25v10.5c0 .138.112.25.25.25h10.5a.25.25 0 0 0 .25-.25V2.75a.25.25 0 0 0-.25-.25ZM8 10a2 2 0 1 1-.001-3.999A2 2 0 0 1 8 10Z"/></svg>
<svg style="position:absolute;left:53px;top:520px" width="14" height="14" viewBox="0 0 16 16" fill="#9198a1"><path d="M2 1.75C2 .784 2.784 0 3.75 0h6.586c.464 0 .909.184 1.237.513l2.914 2.914c.329.328.513.773.513 1.237v9.586A1.75 1.75 0 0 1 13.25 16h-9.5A1.75 1.75 0 0 1 2 14.25Zm1.75-.25a.25.25 0 0 0-.25.25v12.5c0 .138.112.25.25.25h9.5a.25.25 0 0 0 .25-.25V6h-2.75A1.75 1.75 0 0 1 9 4.25V1.5Zm6.75.062V4.25c0 .138.112.25.25.25h2.688l-.011-.013-2.914-2.914-.013-.011Z"/></svg>
<span style="position:absolute;left:74.8px;top:519px;line-height:16px;font-size:12.6px;color:#f0f6fc;font-weight:400;font-family:'Liberation Sans', Arial, sans-serif;letter-spacing:0.015px;white-space:pre;-webkit-text-stroke:0.18px">MovieTest.java</span>
<svg style="position:absolute;left:255px;top:520px" width="14" height="14" viewBox="0 0 16 16" fill="#d29922"><path d="M13.25 1c.966 0 1.75.784 1.75 1.75v10.5A1.75 1.75 0 0 1 13.25 15H2.75A1.75 1.75 0 0 1 1 13.25V2.75C1 1.784 1.784 1 2.75 1ZM2.75 2.5a.25.25 0 0 0-.25.25v10.5c0 .138.112.25.25.25h10.5a.25.25 0 0 0 .25-.25V2.75a.25.25 0 0 0-.25-.25ZM8 10a2 2 0 1 1-.001-3.999A2 2 0 0 1 8 10Z"/></svg>
<svg style="position:absolute;left:53px;top:549px" width="14" height="14" viewBox="0 0 16 16" fill="#9198a1"><path d="M2 1.75C2 .784 2.784 0 3.75 0h6.586c.464 0 .909.184 1.237.513l2.914 2.914c.329.328.513.773.513 1.237v9.586A1.75 1.75 0 0 1 13.25 16h-9.5A1.75 1.75 0 0 1 2 14.25Zm1.75-.25a.25.25 0 0 0-.25.25v12.5c0 .138.112.25.25.25h9.5a.25.25 0 0 0 .25-.25V6h-2.75A1.75 1.75 0 0 1 9 4.25V1.5Zm6.75.062V4.25c0 .138.112.25.25.25h2.688l-.011-.013-2.914-2.914-.013-.011Z"/></svg>
<span style="position:absolute;left:74.8px;top:548px;line-height:16px;font-size:12.6px;color:#f0f6fc;font-weight:400;font-family:'Liberation Sans', Arial, sans-serif;letter-spacing:0.172px;white-space:pre;-webkit-text-stroke:0.18px">MoviesControllerTest.java</span>
<svg style="position:absolute;left:255px;top:549px" width="14" height="14" viewBox="0 0 16 16" fill="#d29922"><path d="M13.25 1c.966 0 1.75.784 1.75 1.75v10.5A1.75 1.75 0 0 1 13.25 15H2.75A1.75 1.75 0 0 1 1 13.25V2.75C1 1.784 1.784 1 2.75 1ZM2.75 2.5a.25.25 0 0 0-.25.25v10.5c0 .138.112.25.25.25h10.5a.25.25 0 0 0 .25-.25V2.75a.25.25 0 0 0-.25-.25ZM8 10a2 2 0 1 1-.001-3.999A2 2 0 0 1 8 10Z"/></svg>
<!-- diff file box -->
<div style="position:absolute;left:291px;top:102px;width:1515px;height:860px;box-sizing:border-box;border:1px solid #3d444d;border-radius:5.4px;background:#0d1117"></div>
<div style="position:absolute;left:292px;top:103px;width:1513px;height:36px;background:#151b23;border-bottom:1px solid #3d444d;border-radius:4.4px 4.4px 0 0"></div>
<svg style="position:absolute;left:307.7px;top:113.4px" width="14.4" height="14.4" viewBox="0 0 16 16" fill="#9198a1"><path d="M12.78 5.22a.749.749 0 0 1 0 1.06l-4.25 4.25a.749.749 0 0 1-1.06 0L3.22 6.28a.749.749 0 1 1 1.06-1.06L8 8.939l3.72-3.719a.749.749 0 0 1 1.06 0Z"/></svg>
<svg style="position:absolute;left:330.2px;top:112.2px" width="14.1" height="14.1" viewBox="0 0 16 16" fill="#9198a1"><path d="m8.177.677 2.896 2.896a.25.25 0 0 1-.177.427H8.75v1.25a.75.75 0 0 1-1.5 0V4H5.104a.25.25 0 0 1-.177-.427L7.823.677a.25.25 0 0 1 .354 0ZM7.25 10.75a.75.75 0 0 1 1.5 0V12h2.146a.25.25 0 0 1 .177.427l-2.896 2.896a.25.25 0 0 1-.354 0l-2.896-2.896A.25.25 0 0 1 5.104 12H7.25v-1.25Zm-5-2a.75.75 0 0 0 0-1.5h-.5a.75.75 0 0 0 0 1.5h.5ZM6 8a.75.75 0 0 1-.75.75h-.5a.75.75 0 0 1 0-1.5h.5A.75.75 0 0 1 6 8Zm2.25.75a.75.75 0 0 0 0-1.5h-.5a.75.75 0 0 0 0 1.5h.5ZM12 8a.75.75 0 0 1-.75.75h-.5a.75.75 0 0 1 0-1.5h.5A.75.75 0 0 1 12 8Zm2.25.75a.75.75 0 0 0 0-1.5h-.5a.75.75 0 0 0 0 1.5h.5Z"/></svg>
<span style="position:absolute;left:350.9px;top:112.1px;line-height:16px;font-size:10.8px;color:#9198a1;font-weight:700;font-family:'Liberation Mono', 'DejaVu Sans Mono', monospace;letter-spacing:0.016px;white-space:pre;">41</span>
<div style="position:absolute;left:370.9px;top:116.8px;width:7.2px;height:7.2px;background:#238636"></div>
<div style="position:absolute;left:379px;top:116.8px;width:7.2px;height:7.2px;background:#238636"></div>
<div style="position:absolute;left:387.1px;top:116.8px;width:7.2px;height:7.2px;background:#da3633"></div>
<div style="position:absolute;left:395.2px;top:116.8px;width:7.2px;height:7.2px;background:#da3633"></div>
<div style="position:absolute;left:403.3px;top:116.8px;width:7.2px;height:7.2px;background:#262c36;outline:0.9px solid #2f3640"></div>
<span style="position:absolute;left:416.9px;top:112.6px;line-height:16px;font-size:10.8px;color:#f0f6fc;font-weight:400;font-family:'Liberation Mono', 'DejaVu Sans Mono', monospace;letter-spacing:0.020px;white-space:pre;-webkit-text-stroke:0.22px">pom.xml</span>
<svg style="position:absolute;left:470px;top:112px" width="14" height="14" viewBox="0 0 16 16" fill="#9198a1"><path d="M0 6.75C0 5.784.784 5 1.75 5h1.5a.75.75 0 0 1 0 1.5h-1.5a.25.25 0 0 0-.25.25v7.5c0 .138.112.25.25.25h7.5a.25.25 0 0 0 .25-.25v-1.5a.75.75 0 0 1 1.5 0v1.5A1.75 1.75 0 0 1 9.25 16h-7.5A1.75 1.75 0 0 1 0 14.25Z"/><path d="M5 1.75C5 .784 5.784 0 6.75 0h7.5C15.216 0 16 .784 16 1.75v7.5A1.75 1.75 0 0 1 14.25 11h-7.5A1.75 1.75 0 0 1 5 9.25Zm1.75-.25a.25.25 0 0 0-.25.25v7.5c0 .138.112.25.25.25h7.5a.25.25 0 0 0 .25-.25v-7.5a.25.25 0 0 0-.25-.25Z"/></svg>
<div style="position:absolute;left:1668.3px;top:107px;width:68.4px;height:28.8px;box-sizing:border-box;border:1px solid #3d444d;border-radius:5.4px"></div>
<div style="position:absolute;left:1676px;top:115px;width:11.7px;height:11.7px;background:#3b3b3b;border:1px solid #6b6b6b;border-radius:2.5px;box-sizing:border-box"></div>
<span style="position:absolute;left:1692px;top:113.3px;line-height:16px;font-size:10.8px;color:#9198a1;font-weight:400;font-family:'Liberation Sans', Arial, sans-serif;letter-spacing:0.264px;white-space:pre;">Viewed</span>
<svg style="position:absolute;left:1748px;top:114px" width="14" height="14" viewBox="0 0 16 16" fill="#9198a1"><path d="M1 2.75C1 1.784 1.784 1 2.75 1h10.5c.966 0 1.75.784 1.75 1.75v7.5A1.75 1.75 0 0 1 13.25 12H9.06l-2.573 2.573A1.458 1.458 0 0 1 4 13.543V12H2.75A1.75 1.75 0 0 1 1 10.25Zm1.75-.25a.25.25 0 0 0-.25.25v7.5c0 .138.112.25.25.25h2a.75.75 0 0 1 .75.75v2.19l2.72-2.72a.749.749 0 0 1 .53-.22h4.5a.25.25 0 0 0 .25-.25v-7.5a.25.25 0 0 0-.25-.25Z"/></svg>
<svg style="position:absolute;left:1776px;top:114px" width="14" height="14" viewBox="0 0 16 16" fill="#9198a1"><path d="M8 9a1.5 1.5 0 1 0 0-3 1.5 1.5 0 0 0 0 3ZM1.5 9a1.5 1.5 0 1 0 0-3 1.5 1.5 0 0 0 0 3Zm13 0a1.5 1.5 0 1 0 0-3 1.5 1.5 0 0 0 0 3Z"/></svg>
<div style="position:absolute;left:292px;top:0;width:1513px;height:943px;overflow:hidden">
<div class="row" style="top:140px;height:25px;background:rgba(56,139,253,.1)">
<div style="position:absolute;left:0;top:0;width:39px;height:100%;background:#0c2d6b"></div>
<span style="position:absolute;right:1483px;top:3.8px;font:10.8px/18px 'Liberation Mono', 'DejaVu Sans Mono', monospace;color:#9198a1;letter-spacing:0.019px">...</span>
<span style="position:absolute;left:58.8px;top:3.6px;font:10.8px/18px 'Liberation Mono', 'DejaVu Sans Mono', monospace;color:#9198a1;letter-spacing:0.019px;white-space:pre;-webkit-text-stroke:0.22px">@@ -1,6 +1,5 @@</span>
</div>
<div class="row" style="top:165px;height:18px">
<div class="num" style="left:0px;width:39px;background:transparent;color:#9198a1;"><span class="in">1</span></div><div class="code" style="left:39px;width:717px;background:transparent"><span class="in">&lt;?<span class="ent">xml</span> <span class="e">version</span>=<span class="s">"1.0"</span> <span class="e">encoding</span>=<span class="s">"UTF-8"</span>?&gt;</span></div>
<div class="num" style="left:756px;width:40px;background:transparent;color:#9198a1;border-left:1px solid #343b44;"><span class="in">1</span></div><div class="code" style="left:796px;width:717px;background:transparent"><span class="in">&lt;?<span class="ent">xml</span> <span class="e">version</span>=<span class="s">"1.0"</span> <span class="e">encoding</span>=<span class="s">"UTF-8"</span>?&gt;</span></div>
</div>
<div class="row" style="top:183px;height:54px">
<div class="num" style="left:0px;width:39px;background:rgba(248,81,73,.3);color:#f0f6fc;"><span class="in">2</span></div><div class="code" style="left:39px;width:717px;background:rgba(248,81,73,.1)"><span class="in"><span class="mk" style="top:.9px">−</span>&lt;<span class="ent">project</span> <span class="e">xmlns</span>=<span class="s">"http://maven.apache.org/POM/4.0.0"</span> <span class="e">xmlns:xsi</span>=<span class="s">"http://www.w3.org/2001/XMLSchema-</span>
<span class="s">instance"</span>
</span></div>
<div class="num" style="left:756px;width:40px;background:rgba(63,185,80,.3);color:#f0f6fc;border-left:1px solid #343b44;"><span class="in">2</span></div><div class="code" style="left:796px;width:717px;background:rgba(46,160,67,.15)"><span class="in"><span class="mk" style="top:.5px">+</span>&lt;<span class="ent">project</span> <span class="e">xmlns</span>=<span class="s">"http://maven.apache.org/POM/4.0.0"</span> <span class="e">xmlns:xsi</span>=<span class="s">"http://www.w3.org/2001/XMLSchema-</span>
<span class="s">instance"</span> <span class="e">xsi:schemaLocation</span>=<span class="s">"http://maven.apache.org/POM/4.0.0 http://maven.apache.org/xsd/maven-</span>
<span class="s">4.0.0.xsd"</span>&gt;</span></div>
</div>
<div class="row" style="top:237px;height:36px">
<div class="num" style="left:0px;width:39px;background:rgba(248,81,73,.3);color:#f0f6fc;"><span class="in">3</span></div><div class="code" style="left:39px;width:717px;background:rgba(248,81,73,.1)"><span class="in"><span class="mk" style="top:.9px">−</span>    <span class="e">xsi:schemaLocation</span>=<span class="s">"http://maven.apache.org/POM/4.0.0 http://maven.apache.org/xsd/maven-</span>
<span class="s">4.0.0.xsd"</span>&gt;</span></div>
<div class="num" style="left:756px;width:40px;background:#151b23;color:#9198a1;border-left:1px solid #343b44;"></div><div class="code" style="left:796px;width:717px;background:#151b23"><span class="in"></span></div>
</div>
<div class="row" style="top:273px;height:18px">
<div class="num" style="left:0px;width:39px;background:transparent;color:#9198a1;"><span class="in">4</span></div><div class="code" style="left:39px;width:717px;background:transparent"><span class="in">    &lt;<span class="ent">modelVersion</span>&gt;4.0.0&lt;/<span class="ent">modelVersion</span>&gt;</span></div>
<div class="num" style="left:756px;width:40px;background:transparent;color:#9198a1;border-left:1px solid #343b44;"><span class="in">3</span></div><div class="code" style="left:796px;width:717px;background:transparent"><span class="in">    &lt;<span class="ent">modelVersion</span>&gt;4.0.0&lt;/<span class="ent">modelVersion</span>&gt;</span></div>
</div>
<div class="row" style="top:291px;height:18px">
<div class="num" style="left:0px;width:39px;background:transparent;color:#9198a1;"><span class="in">5</span></div><div class="code" style="left:39px;width:717px;background:transparent"><span class="in"></span></div>
<div class="num" style="left:756px;width:40px;background:transparent;color:#9198a1;border-left:1px solid #343b44;"><span class="in">4</span></div><div class="code" style="left:796px;width:717px;background:transparent"><span class="in"></span></div>
</div>
<div class="row" style="top:309px;height:18px">
<div class="num" style="left:0px;width:39px;background:transparent;color:#9198a1;"><span class="in">6</span></div><div class="code" style="left:39px;width:717px;background:transparent"><span class="in">    &lt;<span class="ent">groupId</span>&gt;org.springframework&lt;/<span class="ent">groupId</span>&gt;</span></div>
<div class="num" style="left:756px;width:40px;background:transparent;color:#9198a1;border-left:1px solid #343b44;"><span class="in">5</span></div><div class="code" style="left:796px;width:717px;background:transparent"><span class="in">    &lt;<span class="ent">groupId</span>&gt;org.springframework&lt;/<span class="ent">groupId</span>&gt;</span></div>
</div>
<div class="row" style="top:327px;height:26px;background:rgba(56,139,253,.1)">
<div style="position:absolute;left:0;top:0;width:39px;height:100%;background:#0c2d6b"></div>
<svg style="position:absolute;left:12.9px;top:4.4px" width="14.4" height="14.4" viewBox="0 0 16 16" fill="#9198a1"><path d="m8.177.677 2.896 2.896a.25.25 0 0 1-.177.427H8.75v1.25a.75.75 0 0 1-1.5 0V4H5.104a.25.25 0 0 1-.177-.427L7.823.677a.25.25 0 0 1 .354 0ZM7.25 10.75a.75.75 0 0 1 1.5 0V12h2.146a.25.25 0 0 1 .177.427l-2.896 2.896a.25.25 0 0 1-.354 0l-2.896-2.896A.25.25 0 0 1 5.104 12H7.25v-1.25Zm-5-2a.75.75 0 0 0 0-1.5h-.5a.75.75 0 0 0 0 1.5h.5ZM6 8a.75.75 0 0 1-.75.75h-.5a.75.75 0 0 1 0-1.5h.5A.75.75 0 0 1 6 8Zm2.25.75a.75.75 0 0 0 0-1.5h-.5a.75.75 0 0 0 0 1.5h.5ZM12 8a.75.75 0 0 1-.75.75h-.5a.75.75 0 0 1 0-1.5h.5A.75.75 0 0 1 12 8Zm2.25.75a.75.75 0 0 0 0-1.5h-.5a.75.75 0 0 0 0 1.5h.5Z"/></svg>
<span style="position:absolute;left:58.8px;top:3.6px;font:10.8px/18px 'Liberation Mono', 'DejaVu Sans Mono', monospace;color:#9198a1;letter-spacing:0.019px;white-space:pre;-webkit-text-stroke:0.22px">@@ -10,14 +9,19 @@</span>
</div>
<div class="row" style="top:353px;height:18px">
<div class="num" style="left:0px;width:39px;background:transparent;color:#9198a1;"><span class="in">10</span></div><div class="code" style="left:39px;width:717px;background:transparent"><span class="in">    &lt;<span class="ent">parent</span>&gt;</span></div>
<div class="num" style="left:756px;width:40px;background:transparent;color:#9198a1;border-left:1px solid #343b44;"><span class="in">9</span></div><div class="code" style="left:796px;width:717px;background:transparent"><span class="in">    &lt;<span class="ent">parent</span>&gt;</span></div>
</div>
<div class="row" style="top:371px;height:18px">
<div class="num" style="left:0px;width:39px;background:transparent;color:#9198a1;"><span class="in">11</span></div><div class="code" style="left:39px;width:717px;background:transparent"><span class="in">        &lt;<span class="ent">groupId</span>&gt;org.springframework.boot&lt;/<span class="ent">groupId</span>&gt;</span></div>
<div class="num" style="left:756px;width:40px;background:transparent;color:#9198a1;border-left:1px solid #343b44;"><span class="in">10</span></div><div class="code" style="left:796px;width:717px;background:transparent"><span class="in">        &lt;<span class="ent">groupId</span>&gt;org.springframework.boot&lt;/<span class="ent">groupId</span>&gt;</span></div>
</div>
<div class="row" style="top:389px;height:18px">
<div class="num" style="left:0px;width:39px;background:transparent;color:#9198a1;"><span class="in">12</span></div><div class="code" style="left:39px;width:717px;background:transparent"><span class="in">        &lt;<span class="ent">artifactId</span>&gt;spring-boot-starter-parent&lt;/<span class="ent">artifactId</span>&gt;</span></div>
<div class="num" style="left:756px;width:40px;background:transparent;color:#9198a1;border-left:1px solid #343b44;"><span class="in">11</span></div><div class="code" style="left:796px;width:717px;background:transparent"><span class="in">        &lt;<span class="ent">artifactId</span>&gt;spring-boot-starter-parent&lt;/<span class="ent">artifactId</span>&gt;</span></div>
</div>
<div class="row" style="top:407px;height:18px">
<div class="num" style="left:0px;width:39px;background:rgba(248,81,73,.3);color:#f0f6fc;"><span class="in">13</span></div><div class="code" style="left:39px;width:717px;background:rgba(248,81,73,.1)"><span class="in"><span class="mk" style="top:.9px">−</span>        &lt;<span class="ent">version</span>&gt;<span class="xd">2.0.5.RELEASE</span>&lt;/<span class="ent">version</span>&gt;</span></div>
<div class="num" style="left:756px;width:40px;background:rgba(63,185,80,.3);color:#f0f6fc;border-left:1px solid #343b44;"><span class="in">12</span></div><div class="code" style="left:796px;width:717px;background:rgba(46,160,67,.15)"><span class="in"><span class="mk" style="top:.5px">+</span>        &lt;<span class="ent">version</span>&gt;<span class="xa">3.4.3</span>&lt;/<span class="ent">version</span>&gt;</span></div>
</div>
<div class="row" style="top:425px;height:18px">
<div class="num" style="left:0px;width:39px;background:transparent;color:#9198a1;"><span class="in">14</span></div><div class="code" style="left:39px;width:717px;background:transparent"><span class="in">    &lt;/<span class="ent">parent</span>&gt;</span></div>
<div class="num" style="left:756px;width:40px;background:transparent;color:#9198a1;border-left:1px solid #343b44;"><span class="in">13</span></div><div class="code" style="left:796px;width:717px;background:transparent"><span class="in">    &lt;/<span class="ent">parent</span>&gt;</span></div>
</div>
<div class="row" style="top:443px;height:18px">
<div class="num" style="left:0px;width:39px;background:transparent;color:#9198a1;"><span class="in">15</span></div><div class="code" style="left:39px;width:717px;background:transparent"><span class="in">    &lt;<span class="ent">dependencyManagement</span>&gt;</span></div>
<div class="num" style="left:756px;width:40px;background:transparent;color:#9198a1;border-left:1px solid #343b44;"><span class="in">14</span></div><div class="code" style="left:796px;width:717px;background:transparent"><span class="in">    &lt;<span class="ent">dependencyManagement</span>&gt;</span></div>
</div>
<div class="row" style="top:461px;height:18px">
<div class="num" style="left:0px;width:39px;background:transparent;color:#9198a1;"><span class="in">16</span></div><div class="code" style="left:39px;width:717px;background:transparent"><span class="in">        &lt;<span class="ent">dependencies</span>&gt;</span></div>
<div class="num" style="left:756px;width:40px;background:transparent;color:#9198a1;border-left:1px solid #343b44;"><span class="in">15</span></div><div class="code" style="left:796px;width:717px;background:transparent"><span class="in">        &lt;<span class="ent">dependencies</span>&gt;</span></div>
</div>
<div class="row" style="top:479px;height:18px">
<div class="num" style="left:0px;width:39px;background:#151b23;color:#9198a1;"></div><div class="code" style="left:39px;width:717px;background:#151b23"><span class="in"></span></div>
<div class="num" style="left:756px;width:40px;background:rgba(63,185,80,.3);color:#f0f6fc;border-left:1px solid #343b44;"><span class="in">16</span></div><div class="code" style="left:796px;width:717px;background:rgba(46,160,67,.15)"><span class="in"><span class="mk" style="top:.5px">+</span>            &lt;<span class="ent">dependency</span>&gt;</span></div>
</div>
<div class="row" style="top:497px;height:18px">
<div class="num" style="left:0px;width:39px;background:#151b23;color:#9198a1;"></div><div class="code" style="left:39px;width:717px;background:#151b23"><span class="in"></span></div>
<div class="num" style="left:756px;width:40px;background:rgba(63,185,80,.3);color:#f0f6fc;border-left:1px solid #343b44;"><span class="in">17</span></div><div class="code" style="left:796px;width:717px;background:rgba(46,160,67,.15)"><span class="in"><span class="mk" style="top:.5px">+</span>                &lt;<span class="ent">groupId</span>&gt;jakarta.validation&lt;/<span class="ent">groupId</span>&gt;</span></div>
</div>
<div class="row" style="top:515px;height:18px">
<div class="num" style="left:0px;width:39px;background:#151b23;color:#9198a1;"></div><div class="code" style="left:39px;width:717px;background:#151b23"><span class="in"></span></div>
<div class="num" style="left:756px;width:40px;background:rgba(63,185,80,.3);color:#f0f6fc;border-left:1px solid #343b44;"><span class="in">18</span></div><div class="code" style="left:796px;width:717px;background:rgba(46,160,67,.15)"><span class="in"><span class="mk" style="top:.5px">+</span>                &lt;<span class="ent">artifactId</span>&gt;jakarta.validation-api&lt;/<span class="ent">artifactId</span>&gt;</span></div>
</div>
<div class="row" style="top:533px;height:18px">
<div class="num" style="left:0px;width:39px;background:#151b23;color:#9198a1;"></div><div class="code" style="left:39px;width:717px;background:#151b23"><span class="in"></span></div>
<div class="num" style="left:756px;width:40px;background:rgba(63,185,80,.3);color:#f0f6fc;border-left:1px solid #343b44;"><span class="in">19</span></div><div class="code" style="left:796px;width:717px;background:rgba(46,160,67,.15)"><span class="in"><span class="mk" style="top:.5px">+</span>                &lt;<span class="ent">version</span>&gt;3.1.1&lt;/<span class="ent">version</span>&gt;</span></div>
</div>
<div class="row" style="top:551px;height:18px">
<div class="num" style="left:0px;width:39px;background:#151b23;color:#9198a1;"></div><div class="code" style="left:39px;width:717px;background:#151b23"><span class="in"></span></div>
<div class="num" style="left:756px;width:40px;background:rgba(63,185,80,.3);color:#f0f6fc;border-left:1px solid #343b44;"><span class="in">20</span></div><div class="code" style="left:796px;width:717px;background:rgba(46,160,67,.15)"><span class="in"><span class="mk" style="top:.5px">+</span>            &lt;/<span class="ent">dependency</span>&gt;</span></div>
</div>
<div class="row" style="top:569px;height:18px">
<div class="num" style="left:0px;width:39px;background:transparent;color:#9198a1;"><span class="in">17</span></div><div class="code" style="left:39px;width:717px;background:transparent"><span class="in">            &lt;<span class="ent">dependency</span>&gt;</span></div>
<div class="num" style="left:756px;width:40px;background:transparent;color:#9198a1;border-left:1px solid #343b44;"><span class="in">21</span></div><div class="code" style="left:796px;width:717px;background:transparent"><span class="in">            &lt;<span class="ent">dependency</span>&gt;</span></div>
</div>
<div class="row" style="top:587px;height:18px">
<div class="num" style="left:0px;width:39px;background:transparent;color:#9198a1;"><span class="in">18</span></div><div class="code" style="left:39px;width:717px;background:transparent"><span class="in">                &lt;<span class="ent">groupId</span>&gt;software.amazon.awssdk&lt;/<span class="ent">groupId</span>&gt;</span></div>
<div class="num" style="left:756px;width:40px;background:transparent;color:#9198a1;border-left:1px solid #343b44;"><span class="in">22</span></div><div class="code" style="left:796px;width:717px;background:transparent"><span class="in">                &lt;<span class="ent">groupId</span>&gt;software.amazon.awssdk&lt;/<span class="ent">groupId</span>&gt;</span></div>
</div>
<div class="row" style="top:605px;height:18px">
<div class="num" style="left:0px;width:39px;background:transparent;color:#9198a1;"><span class="in">19</span></div><div class="code" style="left:39px;width:717px;background:transparent"><span class="in">                &lt;<span class="ent">artifactId</span>&gt;bom&lt;/<span class="ent">artifactId</span>&gt;</span></div>
<div class="num" style="left:756px;width:40px;background:transparent;color:#9198a1;border-left:1px solid #343b44;"><span class="in">23</span></div><div class="code" style="left:796px;width:717px;background:transparent"><span class="in">                &lt;<span class="ent">artifactId</span>&gt;bom&lt;/<span class="ent">artifactId</span>&gt;</span></div>
</div>
<div class="row" style="top:623px;height:18px">
<div class="num" style="left:0px;width:39px;background:rgba(248,81,73,.3);color:#f0f6fc;"><span class="in">20</span></div><div class="code" style="left:39px;width:717px;background:rgba(248,81,73,.1)"><span class="in"><span class="mk" style="top:.9px">−</span>                &lt;<span class="ent">version</span>&gt;2.<span class="xd">14.27</span>&lt;/<span class="ent">version</span>&gt;</span></div>
<div class="num" style="left:756px;width:40px;background:rgba(63,185,80,.3);color:#f0f6fc;border-left:1px solid #343b44;"><span class="in">24</span></div><div class="code" style="left:796px;width:717px;background:rgba(46,160,67,.15)"><span class="in"><span class="mk" style="top:.5px">+</span>                &lt;<span class="ent">version</span>&gt;2.<span class="xa">30.31</span>&lt;/<span class="ent">version</span>&gt;</span></div>
</div>
<div class="row" style="top:641px;height:18px">
<div class="num" style="left:0px;width:39px;background:transparent;color:#9198a1;"><span class="in">21</span></div><div class="code" style="left:39px;width:717px;background:transparent"><span class="in">                &lt;<span class="ent">type</span>&gt;pom&lt;/<span class="ent">type</span>&gt;</span></div>
<div class="num" style="left:756px;width:40px;background:transparent;color:#9198a1;border-left:1px solid #343b44;"><span class="in">25</span></div><div class="code" style="left:796px;width:717px;background:transparent"><span class="in">                &lt;<span class="ent">type</span>&gt;pom&lt;/<span class="ent">type</span>&gt;</span></div>
</div>
<div class="row" style="top:659px;height:18px">
<div class="num" style="left:0px;width:39px;background:transparent;color:#9198a1;"><span class="in">22</span></div><div class="code" style="left:39px;width:717px;background:transparent"><span class="in">                &lt;<span class="ent">scope</span>&gt;import&lt;/<span class="ent">scope</span>&gt;</span></div>
<div class="num" style="left:756px;width:40px;background:transparent;color:#9198a1;border-left:1px solid #343b44;"><span class="in">26</span></div><div class="code" style="left:796px;width:717px;background:transparent"><span class="in">                &lt;<span class="ent">scope</span>&gt;import&lt;/<span class="ent">scope</span>&gt;</span></div>
</div>
<div class="row" style="top:677px;height:18px">
<div class="num" style="left:0px;width:39px;background:transparent;color:#9198a1;"><span class="in">23</span></div><div class="code" style="left:39px;width:717px;background:transparent"><span class="in">            &lt;/<span class="ent">dependency</span>&gt;</span></div>
<div class="num" style="left:756px;width:40px;background:transparent;color:#9198a1;border-left:1px solid #343b44;"><span class="in">27</span></div><div class="code" style="left:796px;width:717px;background:transparent"><span class="in">            &lt;/<span class="ent">dependency</span>&gt;</span></div>
</div>
<div class="row" style="top:695px;height:25px;background:rgba(56,139,253,.1)">
<div style="position:absolute;left:0;top:0;width:39px;height:100%;background:#0c2d6b"></div>
<svg style="position:absolute;left:12.9px;top:4.4px" width="14.4" height="14.4" viewBox="0 0 16 16" fill="#9198a1"><path d="m8.177.677 2.896 2.896a.25.25 0 0 1-.177.427H8.75v1.25a.75.75 0 0 1-1.5 0V4H5.104a.25.25 0 0 1-.177-.427L7.823.677a.25.25 0 0 1 .354 0ZM7.25 10.75a.75.75 0 0 1 1.5 0V12h2.146a.25.25 0 0 1 .177.427l-2.896 2.896a.25.25 0 0 1-.354 0l-2.896-2.896A.25.25 0 0 1 5.104 12H7.25v-1.25Zm-5-2a.75.75 0 0 0 0-1.5h-.5a.75.75 0 0 0 0 1.5h.5ZM6 8a.75.75 0 0 1-.75.75h-.5a.75.75 0 0 1 0-1.5h.5A.75.75 0 0 1 6 8Zm2.25.75a.75.75 0 0 0 0-1.5h-.5a.75.75 0 0 0 0 1.5h.5ZM12 8a.75.75 0 0 1-.75.75h-.5a.75.75 0 0 1 0-1.5h.5A.75.75 0 0 1 12 8Zm2.25.75a.75.75 0 0 0 0-1.5h-.5a.75.75 0 0 0 0 1.5h.5Z"/></svg>
<span style="position:absolute;left:58.8px;top:3.6px;font:10.8px/18px 'Liberation Mono', 'DejaVu Sans Mono', monospace;color:#9198a1;letter-spacing:0.019px;white-space:pre;-webkit-text-stroke:0.22px">@@ -38,7 +42,7 @@</span>
</div>
<div class="row" style="top:720px;height:18px">
<div class="num" style="left:0px;width:39px;background:transparent;color:#9198a1;"><span class="in">38</span></div><div class="code" style="left:39px;width:717px;background:transparent"><span class="in">        &lt;<span class="ent">dependency</span>&gt;</span></div>
<div class="num" style="left:756px;width:40px;background:transparent;color:#9198a1;border-left:1px solid #343b44;"><span class="in">42</span></div><div class="code" style="left:796px;width:717px;background:transparent"><span class="in">        &lt;<span class="ent">dependency</span>&gt;</span></div>
</div>
<div class="row" style="top:738px;height:18px">
<div class="num" style="left:0px;width:39px;background:transparent;color:#9198a1;"><span class="in">39</span></div><div class="code" style="left:39px;width:717px;background:transparent"><span class="in">            &lt;<span class="ent">groupId</span>&gt;org.json&lt;/<span class="ent">groupId</span>&gt;</span></div>
<div class="num" style="left:756px;width:40px;background:transparent;color:#9198a1;border-left:1px solid #343b44;"><span class="in">43</span></div><div class="code" style="left:796px;width:717px;background:transparent"><span class="in">            &lt;<span class="ent">groupId</span>&gt;org.json&lt;/<span class="ent">groupId</span>&gt;</span></div>
</div>
<div class="row" style="top:756px;height:18px">
<div class="num" style="left:0px;width:39px;background:transparent;color:#9198a1;"><span class="in">40</span></div><div class="code" style="left:39px;width:717px;background:transparent"><span class="in">            &lt;<span class="ent">artifactId</span>&gt;json&lt;/<span class="ent">artifactId</span>&gt;</span></div>
<div class="num" style="left:756px;width:40px;background:transparent;color:#9198a1;border-left:1px solid #343b44;"><span class="in">44</span></div><div class="code" style="left:796px;width:717px;background:transparent"><span class="in">            &lt;<span class="ent">artifactId</span>&gt;json&lt;/<span class="ent">artifactId</span>&gt;</span></div>
</div>
<div class="row" style="top:774px;height:18px">
<div class="num" style="left:0px;width:39px;background:rgba(248,81,73,.3);color:#f0f6fc;"><span class="in">41</span></div><div class="code" style="left:39px;width:717px;background:rgba(248,81,73,.1)"><span class="in"><span class="mk" style="top:.9px">−</span>            &lt;<span class="ent">version</span>&gt;<span class="xd">20200518</span>&lt;/<span class="ent">version</span>&gt;</span></div>
<div class="num" style="left:756px;width:40px;background:rgba(63,185,80,.3);color:#f0f6fc;border-left:1px solid #343b44;"><span class="in">45</span></div><div class="code" style="left:796px;width:717px;background:rgba(46,160,67,.15)"><span class="in"><span class="mk" style="top:.5px">+</span>            &lt;<span class="ent">version</span>&gt;<span class="xa">20250107</span>&lt;/<span class="ent">version</span>&gt;</span></div>
</div>
<div class="row" style="top:792px;height:18px">
<div class="num" style="left:0px;width:39px;background:transparent;color:#9198a1;"><span class="in">42</span></div><div class="code" style="left:39px;width:717px;background:transparent"><span class="in">        &lt;/<span class="ent">dependency</span>&gt;</span></div>
<div class="num" style="left:756px;width:40px;background:transparent;color:#9198a1;border-left:1px solid #343b44;"><span class="in">46</span></div><div class="code" style="left:796px;width:717px;background:transparent"><span class="in">        &lt;/<span class="ent">dependency</span>&gt;</span></div>
</div>
<div class="row" style="top:810px;height:18px">
<div class="num" style="left:0px;width:39px;background:transparent;color:#9198a1;"><span class="in">43</span></div><div class="code" style="left:39px;width:717px;background:transparent"><span class="in">        &lt;<span class="ent">dependency</span>&gt;</span></div>
<div class="num" style="left:756px;width:40px;background:transparent;color:#9198a1;border-left:1px solid #343b44;"><span class="in">47</span></div><div class="code" style="left:796px;width:717px;background:transparent"><span class="in">        &lt;<span class="ent">dependency</span>&gt;</span></div>
</div>
<div class="row" style="top:828px;height:18px">
<div class="num" style="left:0px;width:39px;background:transparent;color:#9198a1;"><span class="in">44</span></div><div class="code" style="left:39px;width:717px;background:transparent"><span class="in">        &lt;<span class="ent">groupId</span>&gt;org.springframework.boot&lt;/<span class="ent">groupId</span>&gt;</span></div>
<div class="num" style="left:756px;width:40px;background:transparent;color:#9198a1;border-left:1px solid #343b44;"><span class="in">48</span></div><div class="code" style="left:796px;width:717px;background:transparent"><span class="in">        &lt;<span class="ent">groupId</span>&gt;org.springframework.boot&lt;/<span class="ent">groupId</span>&gt;</span></div>
</div>
<div class="row" style="top:846px;height:25px;background:rgba(56,139,253,.1)">
<div style="position:absolute;left:0;top:0;width:39px;height:100%;background:#0c2d6b"></div>
<svg style="position:absolute;left:12.9px;top:4.4px" width="14.4" height="14.4" viewBox="0 0 16 16" fill="#9198a1"><path d="m8.177.677 2.896 2.896a.25.25 0 0 1-.177.427H8.75v1.25a.75.75 0 0 1-1.5 0V4H5.104a.25.25 0 0 1-.177-.427L7.823.677a.25.25 0 0 1 .354 0ZM7.25 10.75a.75.75 0 0 1 1.5 0V12h2.146a.25.25 0 0 1 .177.427l-2.896 2.896a.25.25 0 0 1-.354 0l-2.896-2.896A.25.25 0 0 1 5.104 12H7.25v-1.25Zm-5-2a.75.75 0 0 0 0-1.5h-.5a.75.75 0 0 0 0 1.5h.5ZM6 8a.75.75 0 0 1-.75.75h-.5a.75.75 0 0 1 0-1.5h.5A.75.75 0 0 1 6 8Zm2.25.75a.75.75 0 0 0 0-1.5h-.5a.75.75 0 0 0 0 1.5h.5ZM12 8a.75.75 0 0 1-.75.75h-.5a.75.75 0 0 1 0-1.5h.5A.75.75 0 0 1 12 8Zm2.25.75a.75.75 0 0 0 0-1.5h-.5a.75.75 0 0 0 0 1.5h.5Z"/></svg>
<span style="position:absolute;left:58.8px;top:3.6px;font:10.8px/18px 'Liberation Mono', 'DejaVu Sans Mono', monospace;color:#9198a1;letter-spacing:0.019px;white-space:pre;-webkit-text-stroke:0.22px">@@ -49,38 +53,33 @@</span>
</div>
<div class="row" style="top:871px;height:18px">
<div class="num" style="left:0px;width:39px;background:transparent;color:#9198a1;"><span class="in">49</span></div><div class="code" style="left:39px;width:717px;background:transparent"><span class="in">        &lt;<span class="ent">dependency</span>&gt;</span></div>
<div class="num" style="left:756px;width:40px;background:transparent;color:#9198a1;border-left:1px solid #343b44;"><span class="in">53</span></div><div class="code" style="left:796px;width:717px;background:transparent"><span class="in">        &lt;<span class="ent">dependency</span>&gt;</span></div>
</div>
<div class="row" style="top:889px;height:18px">
<div class="num" style="left:0px;width:39px;background:transparent;color:#9198a1;"><span class="in">50</span></div><div class="code" style="left:39px;width:717px;background:transparent"><span class="in">            &lt;<span class="ent">groupId</span>&gt;org.apache.logging.log4j&lt;/<span class="ent">groupId</span>&gt;</span></div>
<div class="num" style="left:756px;width:40px;background:transparent;color:#9198a1;border-left:1px solid #343b44;"><span class="in">54</span></div><div class="code" style="left:796px;width:717px;background:transparent"><span class="in">            &lt;<span class="ent">groupId</span>&gt;org.apache.logging.log4j&lt;/<span class="ent">groupId</span>&gt;</span></div>
</div>
<div class="row" style="top:907px;height:18px">
<div class="num" style="left:0px;width:39px;background:transparent;color:#9198a1;"><span class="in">51</span></div><div class="code" style="left:39px;width:717px;background:transparent"><span class="in">            &lt;<span class="ent">artifactId</span>&gt;log4j-api&lt;/<span class="ent">artifactId</span>&gt;</span></div>
<div class="num" style="left:756px;width:40px;background:transparent;color:#9198a1;border-left:1px solid #343b44;"><span class="in">55</span></div><div class="code" style="left:796px;width:717px;background:transparent"><span class="in">            &lt;<span class="ent">artifactId</span>&gt;log4j-api&lt;/<span class="ent">artifactId</span>&gt;</span></div>
</div>
<div class="row" style="top:925px;height:18px">
<div class="num" style="left:0px;width:39px;background:rgba(248,81,73,.3);color:#f0f6fc;"><span class="in">52</span></div><div class="code" style="left:39px;width:717px;background:rgba(248,81,73,.1)"><span class="in"><span class="mk" style="top:.9px">−</span>            &lt;<span class="ent">version</span>&gt;2.<span class="xd">13</span>.3&lt;/<span class="ent">version</span>&gt;</span></div>
<div class="num" style="left:756px;width:40px;background:rgba(63,185,80,.3);color:#f0f6fc;border-left:1px solid #343b44;"><span class="in">56</span></div><div class="code" style="left:796px;width:717px;background:rgba(46,160,67,.15)"><span class="in"><span class="mk" style="top:.5px">+</span>            &lt;<span class="ent">version</span>&gt;2.<span class="xa">24</span>.3&lt;/<span class="ent">version</span>&gt;</span></div>
</div>
</div>
<!-- floating copilot menu -->
<div style="position:absolute;left:1759px;top:439px;width:50px;height:25.2px;box-sizing:border-box;border:1px solid #2b323c;border-radius:5.4px;background:#262c36"></div>
<div style="position:absolute;left:1783.2px;top:440px;width:1.6px;height:23.2px;background:#39404a"></div>
<svg style="position:absolute;left:1765px;top:444.2px" width="14" height="14" viewBox="0 0 16 16" fill="#f0f6fc"><path d="M7.998 15.035c-4.562 0-7.873-2.914-7.998-3.749V9.338c.085-.628.677-1.686 1.588-2.065.013-.07.024-.143.036-.218.029-.183.06-.384.126-.612-.201-.508-.254-1.084-.254-1.656 0-.87.128-1.769.693-2.484.579-.733 1.494-1.124 2.724-1.261 1.206-.134 2.262.034 2.944.765.05.053.096.108.139.165.044-.057.094-.112.143-.165.682-.731 1.738-.899 2.944-.765 1.23.137 2.145.528 2.724 1.261.566.715.693 1.614.693 2.484 0 .572-.053 1.148-.254 1.656.066.228.098.429.126.612.012.076.024.148.037.218.924.385 1.522 1.471 1.591 2.095v1.872c0 .766-3.351 3.795-8.002 3.795Zm0-1.485c2.28 0 4.584-1.11 5.002-1.433V7.862l-.023-.116c-.49.21-1.075.291-1.727.291-1.146 0-2.059-.327-2.71-.991A3.222 3.222 0 0 1 8 6.303a3.24 3.24 0 0 1-.544.743c-.65.664-1.563.991-2.71.991-.652 0-1.236-.081-1.727-.291l-.023.116v4.255c.419.323 2.722 1.433 5.002 1.433ZM6.762 2.83c-.193-.206-.637-.413-1.682-.297-1.019.113-1.479.404-1.713.7-.247.312-.369.789-.369 1.554 0 .793.129 1.171.308 1.371.162.181.519.379 1.442.379.853 0 1.339-.235 1.638-.54.315-.322.527-.827.617-1.553.117-.935-.037-1.395-.241-1.614Zm4.155-.297c-1.044-.116-1.488.091-1.681.297-.204.219-.359.679-.242 1.614.091.726.303 1.231.618 1.553.299.305.784.54 1.638.54.922 0 1.28-.198 1.442-.379.179-.2.308-.578.308-1.371 0-.765-.123-1.242-.37-1.554-.233-.296-.693-.587-1.713-.7Z"/><path d="M6.25 9.037a.75.75 0 0 1 .75.75v1.501a.75.75 0 0 1-1.5 0V9.787a.75.75 0 0 1 .75-.75Zm4.25.75v1.501a.75.75 0 0 1-1.5 0V9.787a.75.75 0 0 1 1.5 0Z"/></svg>
<div style="position:absolute;left:1792.6px;top:450.5px;width:0;height:0;border-left:3.6px solid transparent;border-right:3.6px solid transparent;border-top:3.6px solid #9198a1"></div>
<div style="position:absolute;left:1757px;top:468.2px;width:80px;height:24.8px;border-radius:5.4px;background:#3d444d"></div>
<span style="position:absolute;left:1765px;top:472.8px;line-height:16px;font-size:10px;color:#ffffff;font-weight:400;font-family:'Liberation Sans', Arial, sans-serif;letter-spacing:0.257px;white-space:pre;">Copilot menu</span>
</div>
</body></html>
